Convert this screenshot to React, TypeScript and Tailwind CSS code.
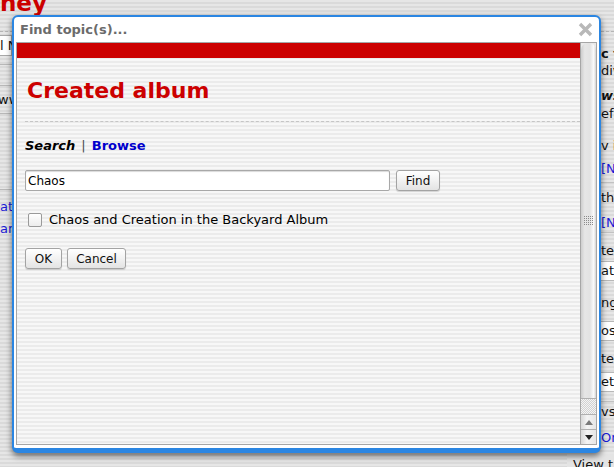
import React from 'react';

const CloseIcon: React.FC = () => (
  <svg width="15" height="15" viewBox="0 0 15 15">
    <path d="M2 2 L13 13 M13 2 L2 13" stroke="#b8b8b8" strokeWidth="3.4" />
  </svg>
);

const Grip: React.FC = () => (
  <svg width="9" height="9" viewBox="0 0 9 9">
    {[0, 2, 4, 6, 8].map((y) =>
      [0, 2, 4, 6, 8].map((x) => <rect key={`${x}-${y}`} x={x} y={y} width="1" height="1" fill="#8a8a8a" />)
    )}
  </svg>
);

const Arrow: React.FC<{ up?: boolean }> = ({ up }) => (
  <div className="h-[15px] flex items-center justify-center border-t border-[#b0b0b0] bg-[linear-gradient(to_right,#d8d8d8,#f4f4f4_40%,#e6e6e6)]">
    <svg width="8" height="5" viewBox="0 0 8 5">
      <path d={up ? 'M0 5 L4 0 L8 5 Z' : 'M0 0 L8 0 L4 5 Z'} fill={up ? '#7a7a7a' : '#222'} />
    </svg>
  </div>
);

const Button: React.FC<{ label: string; className?: string }> = ({ label, className }) => (
  <button
    className={`h-[21px] rounded-[3px] border border-[#a3a3a3] bg-[linear-gradient(to_bottom,#ffffff,#f2f2f2_50%,#e3e3e3)] shadow-[0_1px_1px_rgba(0,0,0,0.15)] text-[12px] text-[#111] ${className ?? ''}`}
  >
    {label}
  </button>
);

export default function App() {
  return (
    <div className="relative w-[614px] h-[467px] overflow-hidden font-['DejaVu_Sans',Verdana,sans-serif] bg-[repeating-linear-gradient(to_bottom,#e6e6e6_0px,#e6e6e6_2px,#dadada_2px,#dadada_4px)]">
      {/* page behind the dialog */}
      <div className="h-[32px] flex flex-col border-b border-dashed border-[#b5b5b5]">
        <div className="mt-[-8px] text-[23px] leading-[22px] font-bold text-[#cc0000]">ney</div>
      </div>
      <div className="flex text-[13px] text-[#111]">
        <div className="w-[12px] overflow-hidden flex flex-col items-end whitespace-nowrap">
          <div className="mt-[3px] h-[21px] w-[14px] border border-[#a8a8a8] bg-white leading-[19px] pl-[1px]">l N</div>
          <div className="mt-[8px] h-[22px] w-[20px] border-t border-b border-[#b8b8b8]" />
          <div className="h-[28px] w-[14px] border-b border-[#b8b8b8] leading-[28px]">ww</div>
          <div className="h-[76px] w-[14px] border-b border-[#b8b8b8]" />
          <div className="mt-[6px] h-[22px] leading-[22px] text-[#1a1ad6] w-[12px]">at</div>
          <div className="h-[22px] leading-[22px] text-[#1a1ad6] w-[12px]">ar</div>
        </div>
        <div className="flex-1" />
        <div className="w-[47px] overflow-hidden whitespace-nowrap pl-[34px]">
          <div className="mt-[13px] h-[17px] leading-[17px] font-bold">c t</div>
          <div className="h-[17px] leading-[17px]">div</div>
          <div className="h-[8px]" />
          <div className="h-[18px] leading-[18px] font-bold italic">ws</div>
          <div className="h-[18px] leading-[18px]">efa</div>
          <div className="h-[14px]" />
          <div className="h-[18px] leading-[18px]">v i</div>
          <div className="h-[28px] leading-[28px] text-[#1a1ad6] border-b border-[#c2c2c2]">[Ne</div>
          <div className="h-[30px] leading-[30px]">th</div>
          <div className="h-[20px] leading-[20px] text-[#1a1ad6] border-b border-[#c2c2c2]">[Ne</div>
          <div className="h-[8px]" />
          <div className="h-[20px] leading-[20px]">te</div>
          <div className="h-[20px] leading-[18px] border-y border-[#b8b8b8] bg-white">ate</div>
          <div className="h-[12px]" />
          <div className="h-[20px] leading-[20px]">ng</div>
          <div className="mt-[8px] h-[20px] leading-[18px] border-y border-[#b8b8b8] bg-white">os</div>
          <div className="h-[8px]" />
          <div className="h-[20px] leading-[20px]">te</div>
          <div className="mt-[3px] h-[20px] leading-[18px] border-y border-[#b8b8b8] bg-white">ete</div>
          <div className="h-[10px] border-b border-[#c2c2c2]" />
          <div className="h-[20px] leading-[20px]">vs</div>
          <div className="mt-[6px] h-[20px] leading-[20px] text-[#1a1ad6]">Or</div>
          <div className="ml-[-34px] mt-[6px] h-[22px] leading-[22px] pl-[6px] bg-[#e4e4e4]">View t</div>
        </div>
      </div>

      {/* dialog */}
      <div className="absolute left-[12px] top-[15px] w-[589px] h-[438px] flex flex-col bg-white rounded-[6px] border-2 border-b-[5px] border-[#2b86e2] shadow-[0_3px_6px_rgba(0,0,0,0.55)]">
        <div className="h-[25px] flex items-center justify-between pl-[6px] pr-[6px]">
          <span className="text-[13px] leading-[16px] font-bold text-[#6b6b6b]">Find topic(s)...</span>
          <CloseIcon />
        </div>
        <div className="flex-1 min-h-0 mx-[2px] mb-[3px] border border-[#a6a6a6] flex">
          <div className="flex-1 bg-[repeating-linear-gradient(to_bottom,#f7f7f7_0px,#f7f7f7_2px,#ebebeb_2px,#ebebeb_4px)]">
            <div className="h-[15px] bg-[#cc0000]" />
            <div className="pl-[8px]">
              <h1 className="pt-[20px] pl-[2px] text-[22px] leading-[26px] font-bold text-[#cc0000]">Created album</h1>
              <div className="mt-[17px] border-t border-dashed border-[#c6c6c6]" />
              <div className="mt-[16px] text-[13px] leading-[16px] font-bold">
                <span className="italic text-black">Search</span>
                <span className="mx-[6px] text-[#4a4a4a] font-normal">|</span>
                <span className="text-[#0000cc]">Browse</span>
              </div>
              <div className="mt-[16px] flex items-center">
                <input
                  readOnly
                  value="Chaos"
                  className="w-[365px] h-[21px] px-[2px] border border-[#a8a8a8] rounded-[2px] bg-white shadow-[inset_0_1px_1px_rgba(0,0,0,0.15)] text-[12px] text-black outline-none"
                />
                <Button label="Find" className="ml-[6px] w-[44px]" />
              </div>
              <div className="mt-[21px] flex items-center">
                <span className="ml-[3px] w-[14px] h-[14px] border border-[#9a9a9a] rounded-[2px] bg-[linear-gradient(to_bottom,#ffffff,#ececec)]" />
                <span className="ml-[7px] text-[13px] leading-[16px] text-black">Chaos and Creation in the Backyard Album</span>
              </div>
              <div className="mt-[20px] flex items-center gap-[5px]">
                <Button label="OK" className="w-[37px]" />
                <Button label="Cancel" className="w-[59px]" />
              </div>
            </div>
          </div>
          <div className="w-[16px] flex flex-col border-l border-[#a6a6a6] bg-[#e9e9e9]">
            <div className="flex-1 flex items-center justify-center rounded-t-[7px] border-b border-[#b0b0b0] bg-[linear-gradient(to_right,#cdcdcd,#e6e6e6_25%,#e2e2e2_60%,#fbfbfb_85%,#d2d2d2)]">
              <Grip />
            </div>
            <div className="h-[15px] bg-[repeating-conic-gradient(#d2d2d2_0_25%,#f4f4f4_0_50%)] bg-[length:2px_2px]" />
            <Arrow up />
            <Arrow />
          </div>
        </div>
      </div>
    </div>
  );
}
